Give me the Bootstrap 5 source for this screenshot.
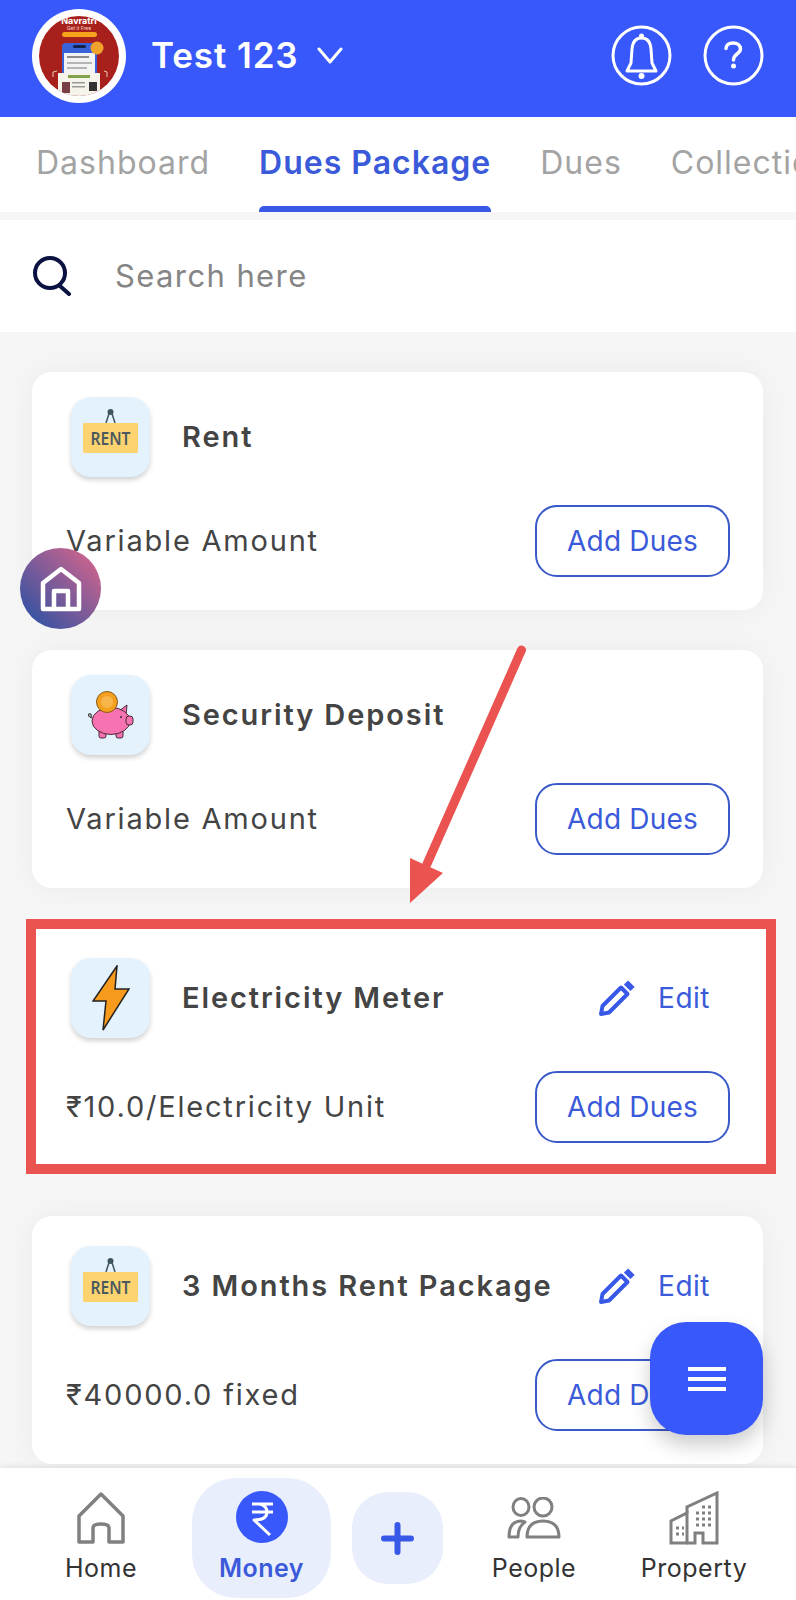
<!DOCTYPE html>
<html lang="en">
<head>
  <meta charset="UTF-8" />
  <meta name="viewport" content="width=device-width, initial-scale=1.0"/>
  <title>Dues Package</title>
  <link href="https://cdn.jsdelivr.net/npm/bootstrap@5.3.3/dist/css/bootstrap.min.css" rel="stylesheet">

  <style>
    body {
      background-color: #f6f6f6;
      font-family: Inter, 'Noto Sans', sans-serif;
      color: #444;
      margin: 0;
    }

    .app-screen {
      width: 796px;
      height: 1600px;
      overflow: hidden;
    }

    .top-bar {
      height: 117px;
      background-color: #3858fb;
      padding: 0 32px 6px;
    }

    .acct-name {
      font-size: 35px;
      font-weight: 600;
      color: #fff;
      margin-left: 25px;
      margin-right: 2px;
      letter-spacing: .9px;
    }

    .help-icon { margin-left: 31px; }

    .tab-strip {
      height: 95px;
      background-color: #fff;
      flex-wrap: nowrap;
      overflow: hidden;
      padding-left: 36px;
      gap: 49px;
    }

    .tab-item {
      font-size: 32px;
      color: #a3a3a3;
      white-space: nowrap;
      padding-top: 22px;
      height: 95px;
      letter-spacing: 1px;
    }

    .tab-item.tab-on {
      color: #3a5ad9;
      font-weight: 600;
      position: relative;
    }

    .tab-item.tab-on::after {
      content: "";
      position: absolute;
      left: 0;
      right: 0;
      bottom: 0;
      height: 6px;
      background-color: #3858e8;
      border-radius: 5px 5px 0 0;
    }

    .search-bar {
      height: 112px;
      margin-top: 8px;
      background-color: #fff;
      padding-left: 32px;
      gap: 43px;
    }

    .search-hint {
      font-size: 31px;
      color: #858585;
      letter-spacing: 1.4px;
    }

    .dues-list {
      padding: 40px 33px 0 32px;
      gap: 40px;
    }

    .dues-card {
      border: 0;
      border-radius: 20px;
      background-color: #fff;
      box-shadow: 0 0 34px rgba(0, 0, 0, .05);
      padding: 25px 33px 33px 34px;
      flex-shrink: 0;
    }

    .dues-card.has-edit { padding-top: 30px; }

    .dues-card.picked {
      padding-bottom: 31px;
      margin-bottom: 2px;
      box-shadow: none;
    }

    .picked-frame {
      position: absolute;
      top: -9px;
      left: -6px;
      right: -13px;
      bottom: 0;
      background-color: #fff;
      border: 10px solid #eb5350;
    }

    .card-inner { position: relative; }

    .amount-row { margin-top: 28px; }
    .has-edit .amount-row { margin-top: 33px; }

    .type-tile {
      width: 79px;
      height: 80px;
      margin-left: 5px;
      border-radius: 20px;
      background-color: #e3f2fd;
      box-shadow: 0 3px 5px rgba(0, 0, 0, .18);
      flex-shrink: 0;
    }

    .type-name {
      font-size: 29px;
      font-weight: 600;
      color: #444;
      margin-left: 32px;
      letter-spacing: 1.9px;
      white-space: nowrap;
    }

    .edit-link {
      font-size: 28px;
      color: #3a5ad9;
      gap: 22px;
      padding-right: 20px;
      letter-spacing: .5px;
    }

    .amount-text {
      font-size: 29px;
      color: #444;
      letter-spacing: 1.8px;
    }

    .btn.add-btn {
      width: 195px;
      height: 72px;
      font-size: 28px;
      letter-spacing: .2px;
      color: #3a5ad9;
      background-color: #fff;
      border: 2px solid #3a5ac9;
      border-radius: 22px;
      padding: 0;
    }

    .bottom-nav {
      height: 132px;
      background-color: #fff;
      box-shadow: 0 -2px 5px rgba(0, 0, 0, .08);
      padding-left: 61px;
    }

    .nav-slot {
      width: 80px;
      font-size: 25px;
      line-height: 30px;
      color: #333;
      white-space: nowrap;
      letter-spacing: .5px;
    }

    .home-slot { margin-top: 24px; }
    .home-slot svg { margin-bottom: 9px; }

    .money-pill {
      width: 139px;
      height: 120px;
      margin: 10px 0 0 51px;
      padding-top: 13px;
      border-radius: 44px;
      background-color: #e9eefd;
      color: #3a5ad9;
      font-weight: 600;
    }

    .money-pill svg { margin-bottom: 10px; }

    .plus-pill {
      width: 91px;
      height: 92px;
      margin: 24px 0 0 21px;
      border-radius: 36px;
      background-color: #e9eefd;
    }

    .people-slot { margin: 29px 0 0 51px; }
    .people-slot svg { margin-bottom: 14px; }

    .property-slot { margin: 23px 0 0 80px; }
    .property-slot svg { margin-bottom: 8px; }

    .drawn-arrow {
      position: absolute;
      left: 0;
      top: 0;
      pointer-events: none;
    }

    .home-bubble {
      position: absolute;
      left: 20px;
      top: 548px;
      width: 81px;
      height: 81px;
      border-radius: 50%;
      background: linear-gradient(45deg, #1f50a6, #e0668a);
    }

    .fab-menu {
      position: absolute;
      left: 650px;
      top: 1322px;
      width: 113px;
      height: 113px;
      border-radius: 36px;
      background-color: #3858fb;
      box-shadow: 0 10px 20px rgba(0, 0, 0, .2);
      gap: 6px;
    }

    .fab-menu span {
      width: 38px;
      height: 4px;
      background-color: #fff;
    }
  </style>
</head>
<body>

  <div class="app-screen d-flex flex-column position-relative">

    <header class="top-bar d-flex align-items-center flex-shrink-0">
      <svg width="94" height="94" viewBox="0 0 94 94">
        <defs><clipPath id="avatar-clip"><circle cx="47" cy="47" r="40"/></clipPath></defs>
        <circle cx="47" cy="47" r="47" fill="#fff"/>
        <circle cx="47" cy="47" r="40" fill="#a8201c"/>
        <g clip-path="url(#avatar-clip)">
          <text x="47" y="15" font-size="9" font-weight="700" fill="#fff" text-anchor="middle" font-family="Inter, sans-serif">Navratri</text>
          <text x="47" y="21" font-size="5" fill="#f3d7c9" text-anchor="middle" font-family="Inter, sans-serif">Get it Free</text>
          <rect x="30" y="23" width="35" height="5" rx="2.500" fill="#f5a21c"/>
          <rect x="30" y="34" width="35" height="34" rx="4" fill="#3a62d8"/>
          <rect x="32" y="44" width="31" height="24" fill="#f3f3f3"/>
          <rect x="41" y="36" width="13" height="3" rx="1.500" fill="#12224e"/>
          <circle cx="65" cy="39" r="6.500" fill="#f0a22a"/>
          <rect x="35" y="47" width="22" height="2" fill="#8c8c8c"/>
          <rect x="35" y="53" width="25" height="2" fill="#b5b5b5"/>
          <rect x="35" y="58" width="20" height="2" fill="#b5b5b5"/>
          <path d="M21 68 L21 63 L25 62 M72 62 L75 63 L75 68" fill="none" stroke="#e8c9b9"/>
          <rect x="26" y="64" width="42" height="26" fill="#f6f4ea"/>
          <rect x="30" y="73" width="8" height="11" fill="#7a3f45"/>
          <rect x="57" y="73" width="8" height="9" fill="#333"/>
          <rect x="36" y="66" width="22" height="3" fill="#7fa24a"/>
          <rect x="40" y="73" width="13" height="1.500" fill="#999"/>
          <rect x="40" y="77" width="13" height="1.500" fill="#999"/>
        </g>
      </svg>
      <span class="acct-name">Test 123</span>
      <svg class="ms-3" width="26" height="17" viewBox="0 0 26 17" fill="none" stroke="#fff" stroke-width="3" stroke-linecap="round" stroke-linejoin="round"><path d="M2 2 L13 15 L24 2"/></svg>
      <svg class="ms-auto" width="61" height="61" viewBox="0 0 61 61" fill="none" stroke="#fff" stroke-width="3">
        <circle cx="30.500" cy="30.500" r="28.500"/>
        <path d="M30.500 13 C24 13 21.500 18 21 24 L20 38 L16 46 L45 46 L41 38 L40 24 C39.500 18 37 13 30.500 13 Z" stroke-linejoin="round"/>
        <circle cx="30.500" cy="11" r="2.500" fill="#fff" stroke="none"/>
        <circle cx="30.500" cy="51" r="3" fill="#fff" stroke="none"/>
      </svg>
      <svg class="help-icon" width="61" height="61" viewBox="0 0 61 61" fill="none" stroke="#fff" stroke-width="3">
        <circle cx="30.500" cy="30.500" r="28.500"/>
        <path d="M23 23.500 C23 20 26 18 30 18 C34.500 18 37.500 20.500 37.500 24 C37.500 28.500 30.500 29 30.500 35" stroke-width="3.500" stroke-linecap="round"/>
        <circle cx="30.500" cy="41" r="2.500" fill="#fff" stroke="none"/>
      </svg>
    </header>

    <nav class="nav tab-strip flex-shrink-0">
      <span class="tab-item">Dashboard</span>
      <span class="tab-item tab-on">Dues Package</span>
      <span class="tab-item">Dues</span>
      <span class="tab-item">Collections</span>
    </nav>

    <div class="search-bar d-flex align-items-center flex-shrink-0">
      <svg width="40" height="40" viewBox="0 0 40 40" fill="none" stroke="#0b1140" stroke-width="4" stroke-linecap="round"><circle cx="18" cy="17" r="15"/><path d="M28 30 L37 38"/></svg>
      <span class="search-hint">Search here</span>
    </div>

    <main class="dues-list d-flex flex-column flex-grow-1 overflow-hidden">

      <div class="card dues-card">
        <div class="d-flex align-items-center">
          <div class="type-tile d-flex align-items-center justify-content-center">
            <svg width="58" height="56" viewBox="0 0 58 56">
              <path d="M24 14 L27.500 3 M33 14 L29.500 3" fill="none" stroke="#3f5560" stroke-width="1.500"/>
              <circle cx="28.500" cy="3" r="3" fill="#3f5560"/>
              <rect x="1" y="14" width="55" height="30" rx="1" fill="#fdd36f"/>
              <text x="28.500" y="36" font-size="18" font-weight="600" fill="#4a5a60" text-anchor="middle" font-family="'Noto Sans', sans-serif" textLength="40" lengthAdjust="spacingAndGlyphs">RENT</text>
            </svg>
          </div>
          <span class="type-name">Rent</span>
        </div>
        <div class="amount-row d-flex align-items-center justify-content-between">
          <span class="amount-text">Variable Amount</span>
          <button type="button" class="btn add-btn">Add Dues</button>
        </div>
      </div>

      <div class="card dues-card">
        <div class="d-flex align-items-center">
          <div class="type-tile d-flex align-items-center justify-content-center">
            <svg width="50" height="50" viewBox="0 0 50 50">
              <path d="M6 28 Q1 26 3 24 Q6 23 5 27" fill="none" stroke="#333" stroke-width="1.200"/>
              <rect x="13" y="40" width="7" height="8" rx="2" fill="#f772b0" stroke="#4a2a35"/>
              <rect x="30" y="40" width="7" height="8" rx="2" fill="#f772b0" stroke="#4a2a35"/>
              <path d="M33 21 L41 15 L40 25 Z" fill="#f772b0" stroke="#4a2a35" stroke-linejoin="round"/>
              <ellipse cx="25" cy="31" rx="19" ry="13.500" fill="#f772b0" stroke="#4a2a35"/>
              <rect x="40" y="26" width="7" height="9" rx="3" fill="#f772b0" stroke="#4a2a35"/>
              <circle cx="35" cy="27" r="1" fill="#333"/>
              <circle cx="21" cy="12" r="10.500" fill="#f5a11f" stroke="#8a5a10"/>
              <circle cx="21" cy="12" r="6" fill="#f8b64a"/>
            </svg>
          </div>
          <span class="type-name">Security Deposit</span>
        </div>
        <div class="amount-row d-flex align-items-center justify-content-between">
          <span class="amount-text">Variable Amount</span>
          <button type="button" class="btn add-btn">Add Dues</button>
        </div>
      </div>

      <div class="card dues-card has-edit picked">
        <div class="picked-frame"></div>
        <div class="card-inner d-flex align-items-center">
          <div class="type-tile d-flex align-items-center justify-content-center">
            <svg width="38" height="66" viewBox="0 0 38 66">
              <path d="M25 1 L1 36 L14 36 L11 65 L37 24 L23 24 Z" fill="#f89a1c" stroke="#222" stroke-width="1.500" stroke-linejoin="miter"/>
            </svg>
          </div>
          <span class="type-name">Electricity Meter</span>
          <span class="edit-link d-flex align-items-center ms-auto">
            <svg width="38" height="38" viewBox="0 0 38 38" fill="none" stroke="#3858e8" stroke-linejoin="round"><path d="M3 35 L4.500 27 L23 8.500 L29.500 15 L11 33.500 Z" stroke-width="4"/><path d="M28 3.500 L34.500 10" stroke-width="6"/></svg>
            Edit
          </span>
        </div>
        <div class="card-inner amount-row d-flex align-items-center justify-content-between">
          <span class="amount-text">₹10.0/Electricity Unit</span>
          <button type="button" class="btn add-btn">Add Dues</button>
        </div>
      </div>

      <div class="card dues-card has-edit">
        <div class="d-flex align-items-center">
          <div class="type-tile d-flex align-items-center justify-content-center">
            <svg width="58" height="56" viewBox="0 0 58 56">
              <path d="M24 14 L27.500 3 M33 14 L29.500 3" fill="none" stroke="#3f5560" stroke-width="1.500"/>
              <circle cx="28.500" cy="3" r="3" fill="#3f5560"/>
              <rect x="1" y="14" width="55" height="30" rx="1" fill="#fdd36f"/>
              <text x="28.500" y="36" font-size="18" font-weight="600" fill="#4a5a60" text-anchor="middle" font-family="'Noto Sans', sans-serif" textLength="40" lengthAdjust="spacingAndGlyphs">RENT</text>
            </svg>
          </div>
          <span class="type-name">3 Months Rent Package</span>
          <span class="edit-link d-flex align-items-center ms-auto">
            <svg width="38" height="38" viewBox="0 0 38 38" fill="none" stroke="#3858e8" stroke-linejoin="round"><path d="M3 35 L4.500 27 L23 8.500 L29.500 15 L11 33.500 Z" stroke-width="4"/><path d="M28 3.500 L34.500 10" stroke-width="6"/></svg>
            Edit
          </span>
        </div>
        <div class="amount-row d-flex align-items-center justify-content-between">
          <span class="amount-text">₹40000.0 fixed</span>
          <button type="button" class="btn add-btn">Add Dues</button>
        </div>
      </div>

    </main>

    <footer class="bottom-nav d-flex align-items-start flex-shrink-0">
      <div class="nav-slot home-slot d-flex flex-column align-items-center">
        <svg width="48" height="52" viewBox="0 0 48 52" fill="none" stroke="#808080" stroke-width="3.500" stroke-linejoin="round"><path d="M24 2 L46 24 L46 50 L32 50 L32 36 Q32 32 24 32 Q16 32 16 36 L16 50 L2 50 L2 24 Z"/></svg>
        <span>Home</span>
      </div>
      <div class="nav-slot money-pill d-flex flex-column align-items-center">
        <svg width="52" height="52" viewBox="0 0 52 52"><circle cx="26" cy="26" r="26" fill="#3858fb"/><path d="M16 13 L37 13 M16 21 L37 21 M24 13 Q31 15 31 21 Q31 29 18 29 L34 44" fill="none" stroke="#fff" stroke-width="3" stroke-linejoin="round"/></svg>
        <span>Money</span>
      </div>
      <div class="plus-pill d-flex align-items-center justify-content-center">
        <svg width="33" height="33" viewBox="0 0 33 33" stroke="#3858e8" stroke-width="6" stroke-linecap="round"><path d="M16.500 3 L16.500 30 M3 16.500 L30 16.500"/></svg>
      </div>
      <div class="nav-slot people-slot d-flex flex-column align-items-center">
        <svg width="54" height="42" viewBox="0 0 54 42" fill="none" stroke="#808080" stroke-width="3" stroke-linejoin="round"><ellipse cx="14" cy="10" rx="8" ry="8.500"/><ellipse cx="36" cy="10" rx="9" ry="9"/><path d="M2 40 Q2 24 14 24 L18 25 Q11 30 11 40 Z"/><path d="M20 40 Q20 24 36 24 Q52 24 52 40 Z"/></svg>
        <span>People</span>
      </div>
      <div class="nav-slot property-slot d-flex flex-column align-items-center">
        <svg width="50" height="54" viewBox="0 0 50 54" fill="none" stroke="#808080" stroke-width="3"><path d="M2 52 L2 30 L18 22 L18 52 Z"/><path d="M18 22 L18 16 L48 2 L48 52 L34 52 L34 42 L26 42 L26 52 L18 52"/><path stroke-dasharray="3 3" d="M27 22 L45 22 M27 28 L45 28 M27 34 L45 34 M33 16 L45 16 M7 37 L15 37 M7 43 L15 43"/></svg>
        <span>Property</span>
      </div>
    </footer>

    <div class="home-bubble d-flex align-items-center justify-content-center">
      <svg width="42" height="46" viewBox="0 0 42 46" fill="none" stroke="#fff" stroke-width="4.500" stroke-linejoin="round"><path d="M21 3 L39 17 L39 43 L3 43 L3 17 Z"/><path d="M14 43 L14 25 L28 25 L28 43"/></svg>
    </div>

    <svg class="drawn-arrow" width="796" height="1600" viewBox="0 0 796 1600">
      <path d="M521.500 650 L427 864" stroke="#eb5350" stroke-width="9" stroke-linecap="round" fill="none"/>
      <path d="M410 903 L410 858 L443 873 Z" fill="#eb5350"/>
    </svg>

    <div class="fab-menu d-flex flex-column align-items-center justify-content-center">
      <span></span><span></span><span></span>
    </div>
  </div>

  <script src="https://cdn.jsdelivr.net/npm/bootstrap@5.3.3/dist/js/bootstrap.bundle.min.js"></script>
</body>
</html>
